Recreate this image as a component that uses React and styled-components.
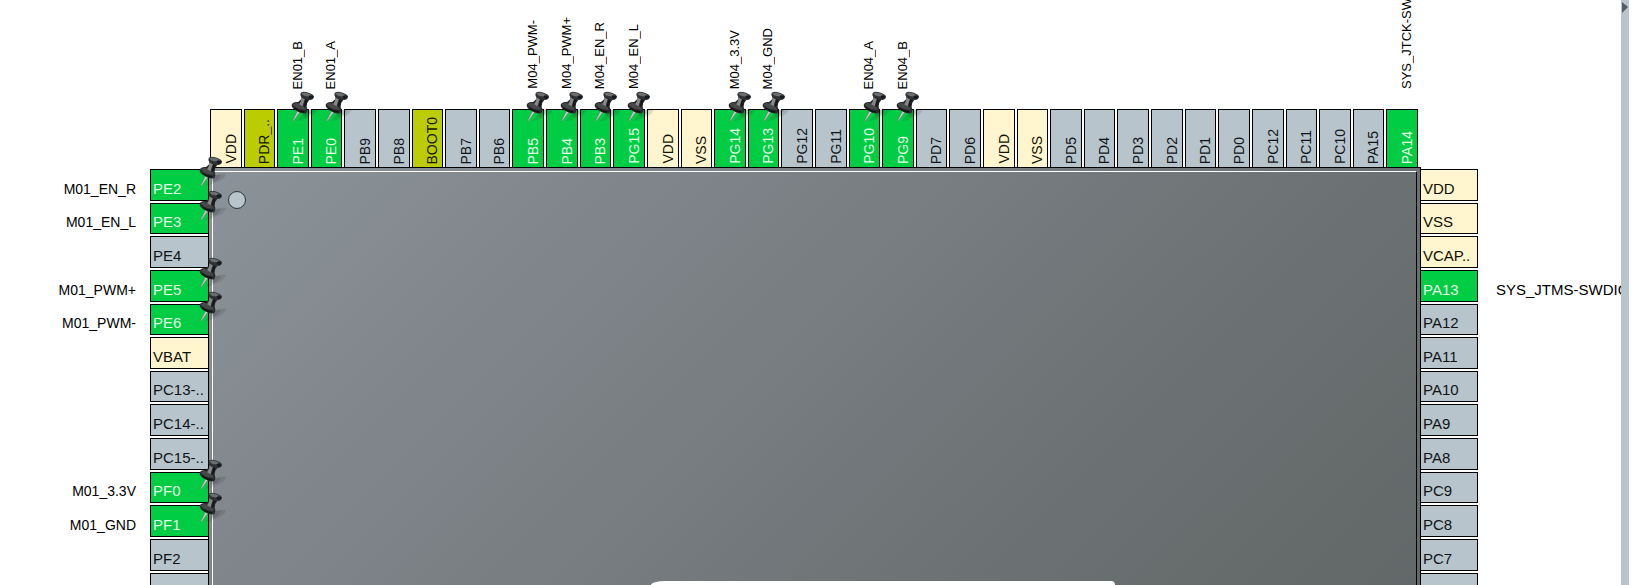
import React from "react";
import styled, { createGlobalStyle, css } from "styled-components";

const GlobalStyle = createGlobalStyle`
  * { box-sizing: border-box; }
  body {
    margin: 0;
    background: #fff;
    overflow: hidden;
    font-family: "Liberation Sans", Arial, sans-serif;
  }
`;

const PIN_COLORS = {
  free: { background: "#b8c4cb", text: "#101418" },
  power: { background: "#fff5cf", text: "#101000" },
  used: { background: "#00cc44", text: "#e6ffe6" },
  boot: { background: "#bbcc00", text: "#141800" },
};

const PINS_PER_SIDE = 36;

const Page = styled.main`
  display: flex;
  height: 100vh;
  overflow: hidden;
  padding-right: 10px;
`;

const PinoutView = styled.section`
  position: relative;
  flex: 1;
  min-width: 0;
  overflow: hidden;
  display: grid;
  grid-template-columns: 150px 58px 1fr 57px 143px;
  grid-template-rows: 90px 77px auto;
  align-content: start;
`;

const topTrack = css`
  grid-column: 3;
  display: grid;
  grid-template-columns: repeat(${PINS_PER_SIDE}, minmax(0, 1fr));
  column-gap: 2px;
  padding: 0 3px 0 2px;
`;

const TopLabels = styled.div`
  ${topTrack}
  grid-row: 1;
`;

const TopPins = styled.div`
  ${topTrack}
  grid-row: 2;
  padding-top: 19px;
`;

const sideTrack = css`
  grid-row: 3;
  display: grid;
  grid-template-rows: repeat(${PINS_PER_SIDE}, minmax(0, 1fr));
  row-gap: 2px;
  padding: 2px 0;
`;

const SideLabels = styled.div`
  ${sideTrack}
  grid-column: ${(p) => (p.$side === "left" ? 1 : 5)};
  padding-left: ${(p) => (p.$side === "left" ? 0 : 18)}px;
  padding-right: ${(p) => (p.$side === "left" ? 14 : 0)}px;
`;

const SidePins = styled.div`
  ${sideTrack}
  grid-column: ${(p) => (p.$side === "left" ? 2 : 4)};
`;

const pinBase = css`
  position: relative;
  display: flex;
  align-items: flex-end;
  min-width: 0;
  min-height: 0;
  margin: 0;
  border: 1px solid #000;
  border-radius: 0;
  background: ${(p) => PIN_COLORS[p.$kind].background};
  color: ${(p) => PIN_COLORS[p.$kind].text};
  font-family: inherit;
  line-height: 16px;
  white-space: nowrap;
`;

const SidePin = styled.button`
  ${pinBase}
  justify-content: flex-start;
  padding: 0 0 3px 2px;
  font-size: 15px;
  border-left-width: ${(p) => (p.$side === "left" ? 1 : 0)}px;
  border-right-width: ${(p) => (p.$side === "left" ? 0 : 1)}px;
`;

const TopPin = styled.button`
  ${pinBase}
  justify-content: flex-end;
  padding: 0 2px 3px 0;
  font-size: 14px;
  border-bottom-width: 0;
`;

const VerticalText = styled.span`
  writing-mode: vertical-rl;
  transform: rotate(180deg);
  line-height: 16px;
  white-space: nowrap;
`;

const TopLabel = styled.div`
  display: flex;
  align-items: flex-end;
  justify-content: flex-end;
  min-width: 0;
  min-height: 0;
  padding: 0 3px 1px 0;
  font-size: 13px;
  color: #000;
`;

const SideLabel = styled.div`
  display: flex;
  align-items: flex-end;
  justify-content: ${(p) => (p.$side === "left" ? "flex-end" : "flex-start")};
  min-height: 0;
  padding-bottom: 4px;
  font-size: ${(p) => (p.$side === "left" ? 14 : 15)}px;
  line-height: 16px;
  white-space: nowrap;
  color: #000;
`;

const Chip = styled.div`
  grid-column: 3;
  grid-row: 3;
  aspect-ratio: 1;
  padding: 3px;
  border: 1px solid #000;
  background: linear-gradient(135deg, #8b939a 0%, #80868b 17%, #6b7172 50%, #626867 67%, #545856 100%);
`;

const ChipFace = styled.div`
  height: 100%;
  padding: 19px 15px;
  border: 1px solid #fff;
  border-right-color: #000;
`;

const PinOneDot = styled.div`
  width: 18px;
  height: 18px;
  border: 1px solid #2c343a;
  border-radius: 50%;
  background: #b9c5cc;
`;

const TackSvg = styled.svg`
  position: absolute;
  z-index: 2;
  left: ${(p) => (p.$side === "top" ? 13 : 48)}px;
  top: ${(p) => (p.$side === "top" ? -19 : -14)}px;
  pointer-events: none;
`;

const Splitter = styled.div`
  width: 8px;
  background: #b9c4cc;
`;

const Popup = styled.div`
  position: absolute;
  left: 651px;
  bottom: 0;
  width: 464px;
  height: 4px;
  border-radius: 14px 4px 0 0 / 4px 4px 0 0;
  background: #fff;
`;

function Tack({ side }) {
  return (
    <TackSvg $side={side} width="32" height="33" viewBox="0 0 32 33" aria-hidden="true">
      <path d="M10 25 Q17 16 27 18 Q26 23 18 26 Q13 29 6 30Z" fill="#20262a" opacity="0.13" />
      <path d="M11 23 Q16 18 22 19 Q21 23 14 26Z" fill="#20262a" opacity="0.16" />
      <path d="M6.4 20 L1.6 29.6 L2.6 30 L9 21Z" fill="#c8c8c2" stroke="#686b68" strokeWidth="0.5" />
      <path d="M0.8 13.5 Q2 10.5 7 11 L10.5 8 L10 4 L19 8 L16.2 12 L15.6 16 Q17.4 19.8 15 22.4 Q9.5 22.8 4 19 Q0 16 0.8 13.5Z" fill="#292a2c" />
      <path d="M1.6 13.6 Q4 11.2 8 12.4 Q13.5 15 15 18.6 Q10 19 5 16.8Z" fill="#46484a" />
      <path d="M10.6 6.5 L14 8.5 Q12.4 11 11.6 15.2 L8.2 13.2 Q10.4 11 10.6 6.5Z" fill="#858789" />
      <path d="M14 8.5 L16.5 8.8 L14.6 15.4 L12.6 15.4Z" fill="#17181a" />
      <path d="M9.5 2.5 Q10.5 -0.2 15 1 Q21 2.3 23 5.2 Q23 8.4 19.5 9 Q12 8.2 9.5 4.7Z" fill="#303234" />
      <path d="M10.5 2.5 Q12.5 0.8 16 2 Q20 3 21.4 5 Q17 6 12.4 4.5Z" fill="#6b6e70" />
      <ellipse cx="19.8" cy="6" rx="2.3" ry="1.7" fill="#151b22" />
      <path d="M3.4 17 Q7 20.2 13 21" fill="none" stroke="#111214" strokeWidth="1.4" />
    </TackSvg>
  );
}

const topPins = [
  ["VDD", "power"],
  ["PDR_..", "boot"],
  ["PE1", "used", "EN01_B"],
  ["PE0", "used", "EN01_A"],
  ["PB9", "free"],
  ["PB8", "free"],
  ["BOOT0", "boot"],
  ["PB7", "free"],
  ["PB6", "free"],
  ["PB5", "used", "M04_PWM-"],
  ["PB4", "used", "M04_PWM+"],
  ["PB3", "used", "M04_EN_R"],
  ["PG15", "used", "M04_EN_L"],
  ["VDD", "power"],
  ["VSS", "power"],
  ["PG14", "used", "M04_3.3V"],
  ["PG13", "used", "M04_GND"],
  ["PG12", "free"],
  ["PG11", "free"],
  ["PG10", "used", "EN04_A"],
  ["PG9", "used", "EN04_B"],
  ["PD7", "free"],
  ["PD6", "free"],
  ["VDD", "power"],
  ["VSS", "power"],
  ["PD5", "free"],
  ["PD4", "free"],
  ["PD3", "free"],
  ["PD2", "free"],
  ["PD1", "free"],
  ["PD0", "free"],
  ["PC12", "free"],
  ["PC11", "free"],
  ["PC10", "free"],
  ["PA15", "free"],
  ["PA14", "used", "SYS_JTCK-SW", "system"],
];

const leftPins = [
  ["PE2", "used", "M01_EN_R"],
  ["PE3", "used", "M01_EN_L"],
  ["PE4", "free"],
  ["PE5", "used", "M01_PWM+"],
  ["PE6", "used", "M01_PWM-"],
  ["VBAT", "power"],
  ["PC13-..", "free"],
  ["PC14-..", "free"],
  ["PC15-..", "free"],
  ["PF0", "used", "M01_3.3V"],
  ["PF1", "used", "M01_GND"],
  ["PF2", "free"],
  ["", "free"],
];

const rightPins = [
  ["VDD", "power"],
  ["VSS", "power"],
  ["VCAP..", "power"],
  ["PA13", "used", "SYS_JTMS-SWDIO", "system"],
  ["PA12", "free"],
  ["PA11", "free"],
  ["PA10", "free"],
  ["PA9", "free"],
  ["PA8", "free"],
  ["PC9", "free"],
  ["PC8", "free"],
  ["PC7", "free"],
  ["", "free"],
];

const isTacked = ([, , label, owner]) => Boolean(label) && owner !== "system";

function Side({ side, pins }) {
  return (
    <>
      <SideLabels $side={side}>
        {pins.map(([, , label], i) => (
          <SideLabel key={i} $side={side}>{label}</SideLabel>
        ))}
      </SideLabels>
      <SidePins $side={side}>
        {pins.map((pin, i) => (
          <SidePin key={i} as={pin[0] ? "button" : "div"} $side={side} $kind={pin[1]}>
            {pin[0]}
            {isTacked(pin) && <Tack side={side} />}
          </SidePin>
        ))}
      </SidePins>
    </>
  );
}

export default function App() {
  return (
    <>
      <GlobalStyle />
      <Page>
        <PinoutView>
          <TopLabels>
            {topPins.map(([, , label], i) => (
              <TopLabel key={i}>{label && <VerticalText>{label}</VerticalText>}</TopLabel>
            ))}
          </TopLabels>
          <TopPins>
            {topPins.map((pin, i) => (
              <TopPin key={i} $kind={pin[1]}>
                <VerticalText>{pin[0]}</VerticalText>
                {isTacked(pin) && <Tack side="top" />}
              </TopPin>
            ))}
          </TopPins>
          <Chip>
            <ChipFace>
              <PinOneDot />
            </ChipFace>
          </Chip>
          <Side side="left" pins={leftPins} />
          <Side side="right" pins={rightPins} />
          <Popup />
        </PinoutView>
        <Splitter>
          <svg width="8" height="12" viewBox="0 0 8 12" aria-hidden="true">
            <path d="M1 0 L7 5 L1 11Z" fill="#555b60" />
          </svg>
        </Splitter>
      </Page>
    </>
  );
}
